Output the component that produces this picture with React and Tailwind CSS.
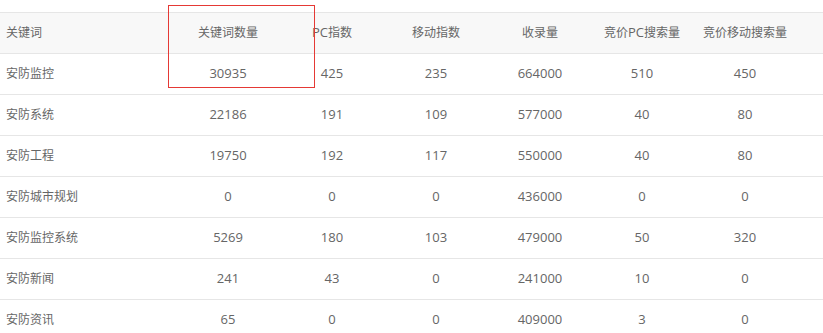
import React from "react";

const headers = ["关键词", "关键词数量", "PC指数", "移动指数", "收录量", "竞价PC搜索量", "竞价移动搜索量"];
const rows = [
  ["安防监控", "30935", "425", "235", "664000", "510", "450"],
  ["安防系统", "22186", "191", "109", "577000", "40", "80"],
  ["安防工程", "19750", "192", "117", "550000", "40", "80"],
  ["安防城市规划", "0", "0", "0", "436000", "0", "0"],
  ["安防监控系统", "5269", "180", "103", "479000", "50", "320"],
  ["安防新闻", "241", "43", "0", "241000", "10", "0"],
  ["安防资讯", "65", "0", "0", "409000", "3", "0"],
];

const cols = "grid grid-cols-[176px_104px_104px_104px_104px_100px_106px_1fr]";

function Txt({ s }) {
  const runs = s.match(/[\u3000-\u9fff]+|[^\u3000-\u9fff]+/g) || [];
  return (
    <>
      {runs.map((r, i) =>
        /[\u3000-\u9fff]/.test(r) ? (
          <span key={i} className="text-[12px]">{r}</span>
        ) : (
          <span key={i}>{r}</span>
        )
      )}
    </>
  );
}

export default function App() {
  return (
    <div
      className="relative w-[823px] h-[333px] overflow-hidden bg-white pt-[12px] text-[13px] text-[#666]"
      style={{ fontFamily: '"Open Sans", "Noto Sans CJK SC", sans-serif' }}
    >
      <div className="border-t border-[#e6e6e6]">
        <div className={`${cols} h-[41px] items-center bg-[#f8f8f8] border-b border-[#e6e6e6]`}>
          {headers.map((h, i) => (
            <div key={i} className={i === 0 ? "pl-[6px]" : "text-center"}><Txt s={h} /></div>
          ))}
          <div />
        </div>
        {rows.map((r, ri) => (
          <div key={ri} className={`${cols} h-[41px] items-center border-b border-[#e6e6e6]`}>
            {r.map((c, i) => (
              <div key={i} className={i === 0 ? "pl-[6px]" : "text-center"}><Txt s={c} /></div>
            ))}
            <div />
          </div>
        ))}
      </div>
      <div className="absolute left-[168px] top-[5px] w-[147px] h-[83px] border border-[#e53935]" />
    </div>
  );
}
